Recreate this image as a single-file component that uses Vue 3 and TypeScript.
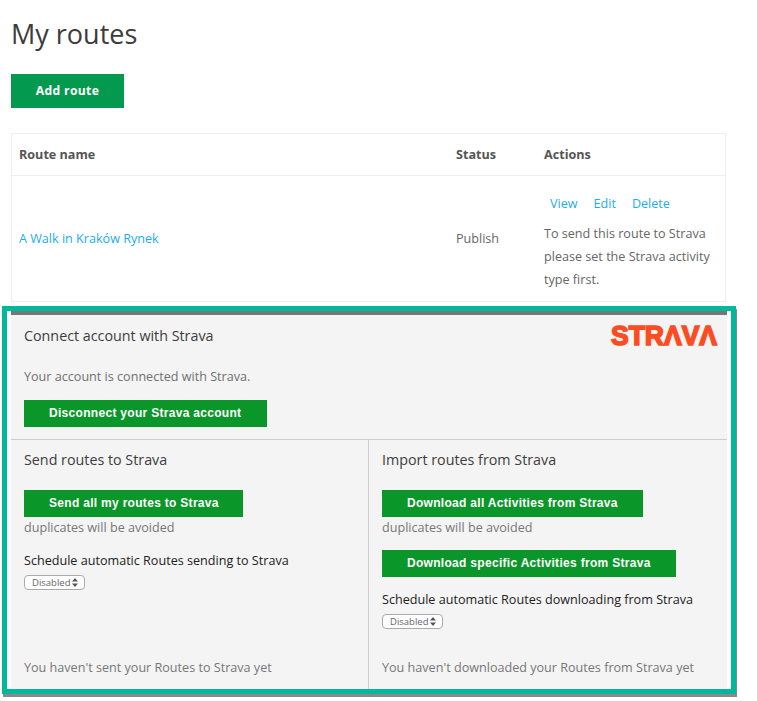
<script setup lang="ts">
interface Route { name: string; status: string }
const route: Route = { name: 'A Walk in Kraków Rynek', status: 'Publish' }
const actions: string[] = ['View', 'Edit', 'Delete']
</script>

<template>
  <main class="page">
    <h1 class="title">My routes</h1>
    <button class="add">Add route</button>
    <table class="routes">
      <thead>
        <tr>
          <th class="c1">Route name</th>
          <th class="c2">Status</th>
          <th>Actions</th>
        </tr>
      </thead>
      <tbody>
        <tr>
          <td class="link">{{ route.name }}</td>
          <td>{{ route.status }}</td>
          <td class="act">
            <div class="links"><a v-for="a in actions" :key="a">{{ a }}</a></div>
            <p>To send this route to Strava please set the Strava activity type first.</p>
          </td>
        </tr>
      </tbody>
    </table>

    <section class="frame">
      <div class="panel">
        <div class="connect">
          <div class="connect-head">
            <h2>Connect account with Strava</h2>
            <svg class="logo" width="122" height="38" viewBox="0 0 122 38">
              <text x="4" y="28" textLength="106" lengthAdjust="spacingAndGlyphs">STRΛVΛ</text>
            </svg>
          </div>
          <p class="note">Your account is connected with Strava.</p>
          <button class="sb disconnect">Disconnect your Strava account</button>
        </div>
        <div class="cols">
          <div class="col left">
            <h2>Send routes to Strava</h2>
            <button class="sb first send">Send all my routes to Strava</button>
            <p class="dup">duplicates will be avoided</p>
            <p class="sched s1">Schedule automatic Routes sending to Strava</p>
            <div class="select">
              Disabled
              <svg width="6" height="9" viewBox="0 0 6 9"><path d="M3 0 6 3.6H0ZM3 9 0 5.4H6Z" fill="#555"/></svg>
            </div>
            <p class="status">You haven't sent your Routes to Strava yet</p>
          </div>
          <div class="col">
            <h2>Import routes from Strava</h2>
            <button class="sb first">Download all Activities from Strava</button>
            <p class="dup">duplicates will be avoided</p>
            <button class="sb second">Download specific Activities from Strava</button>
            <p class="sched s2">Schedule automatic Routes downloading from Strava</p>
            <div class="select">
              Disabled
              <svg width="6" height="9" viewBox="0 0 6 9"><path d="M3 0 6 3.6H0ZM3 9 0 5.4H6Z" fill="#555"/></svg>
            </div>
            <p class="status">You haven't downloaded your Routes from Strava yet</p>
          </div>
        </div>
      </div>
    </section>
  </main>
</template>

<style>
html, body { background: #fff; }
</style>

<style scoped>
.page {
  width: 757px;
  height: 701px;
  overflow: hidden;
  box-sizing: border-box;
  padding-top: 14px;
  font-family: "Open Sans", sans-serif;
  color: #666;
}
.title {
  margin: 0 0 21px 11px;
  font-size: 27px;
  line-height: 39px;
  font-weight: 400;
  color: #3c3c3c;
}
.add {
  display: block;
  margin: 0 0 25px 11px;
  width: 113px;
  height: 34px;
  border: 0;
  padding: 0 0 2px;
  background: #039a4f;
  color: #fff;
  font: 700 12.2px "Open Sans", sans-serif;
  letter-spacing: 0.3px;
}
.routes {
  margin-left: 11px;
  width: 715px;
  height: 169px;
  border-collapse: collapse;
  border: 1px solid #eee;
  font-size: 12.6px;
  table-layout: fixed;
}
th {
  height: 41px;
  padding: 0 7px;
  text-align: left;
  font-weight: 700;
  color: #555;
  border-bottom: 1px solid #eee;
}
.c1 { width: 423px; }
.c2 { width: 74px; }
td { padding: 0 7px; }
.link { color: #1cadef; }
.act { line-height: 23px; padding: 6px 10px 0 7px; }
.links { display: flex; gap: 16px; padding-left: 6px; margin-bottom: 7px; }
.links a { color: #1cadef; }
.act p { margin: 0; }

.frame {
  box-sizing: border-box;
  margin: 4px 0 0 2px;
  width: 734px;
  height: 388px;
  border: 5px solid #02b89c;
  box-shadow: 1px 3px 0 #8a8a8a;
  background: #fff;
  padding: 0 4px;
}
.panel {
  height: 100%;
  box-sizing: border-box;
  background: #f4f4f4;
  border-top: 4px solid;
  border-image: linear-gradient(#777 0 40%, #c4c4c4 40% 100%) 1;
  border-left: 0; border-right: 0; border-bottom: 0;
  display: flex;
  flex-direction: column;
}
h2 {
  margin: 0;
  font-size: 14.3px;
  line-height: 20px;
  font-weight: 400;
  color: #3d3d3d;
}
.connect {
  height: 125px;
  box-sizing: border-box;
  padding: 11px 7px 0 13px;
  border-bottom: 1px solid #ccc;
}
.connect-head { display: flex; justify-content: space-between; align-items: flex-start; height: 20px; }
.logo { margin: -9px -9px 0 0; }
.logo text {
  font: 700 27px "Liberation Sans", Arial, sans-serif;
  fill: #fc4c22;
  stroke: #fc4c22;
  stroke-width: 1.6px;
}
.note { margin: 22px 0 0; font-size: 12.6px; line-height: 17px; color: #707070; }
.sb {
  display: block;
  height: 27px;
  border: 0;
  padding: 0 0 2px 25px;
  text-align: left;
  background: #0b962a;
  color: #fff;
  font: 700 12px "Liberation Sans", Arial, sans-serif;
  letter-spacing: 0.3px;
  white-space: nowrap;
  width: 261px;
}
.disconnect { width: 243px; }
.send { width: 219px; }
.second { width: 294px; }
.connect .sb { margin-top: 15px; }
.cols { flex: 1; display: grid; grid-template-columns: 358px 1fr; min-height: 0; }
.col {
  position: relative;
  padding: 10px 0 0 13px;
  display: flex;
  flex-direction: column;
  align-items: flex-start;
}
.left { border-right: 1px solid #ccc; }
.first { margin-top: 20px; }
.dup { margin: 2px 0 0; font-size: 12.6px; line-height: 18px; color: #777; }
.second { margin-top: 13px; }
.sched { margin: 0; font-size: 12.6px; line-height: 18px; color: #222; }
.s1 { margin-top: 15px; }
.s2 { margin-top: 14px; }
.select {
  box-sizing: border-box;
  margin-top: 5px;
  width: 61px;
  height: 15px;
  border: 1px solid #aaa;
  border-radius: 4px;
  background: #fff;
  font-size: 9.5px;
  line-height: 13px;
  color: #666;
  padding-left: 7px;
  display: flex;
  align-items: center;
  gap: 2px;
}
.status {
  margin: auto 0 12px;
  font-size: 12.6px;
  line-height: 18px;
  color: #777;
}
</style>
